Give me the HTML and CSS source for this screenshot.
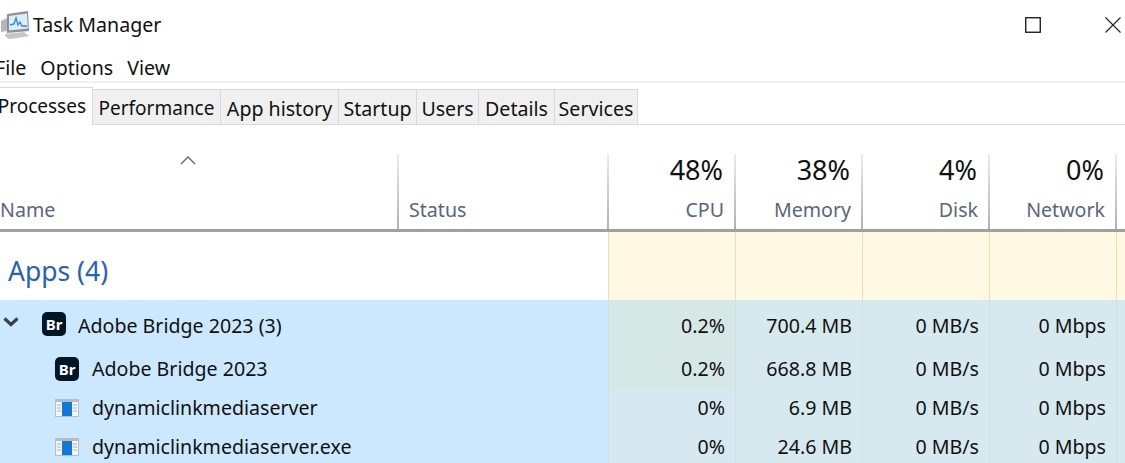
FILE: index.html
```html
<!DOCTYPE html>
<html>
<head>
	<meta charset="UTF-8" />
	<title>Task Manager</title>
	<link rel="stylesheet" href="styles.css">
</head>
<body>
	<div class="titlebar">
		<svg class="app-icon" width="30" height="30" viewBox="0 0 30 30">
			<path d="M0 12l6-3v13l-6 1z" fill="#b4b8bc"/>
			<path d="M6 5l21-3 1 20-22 2z" fill="#8b9197"/>
			<path d="M8 7l18-2.5.8 15-18.8 2z" fill="#dcedfa"/>
			<path d="M9 16l4-1 2-6 2 7 2-3 2 4h5" fill="none" stroke="#2f86d6" stroke-width="1.3"/>
			<path d="M4 25l19-2 5 4-18 3c-3 0-6-2-6-5z" fill="#c2c6c9"/>
		</svg>
		<span class="title">Task Manager</span>
		<div class="window-buttons">
			<svg class="win-max" width="16" height="16" viewBox="0 0 16 16"><rect x=".75" y=".75" width="14.5" height="14.5" fill="none" stroke="#111" stroke-width="1.3"/></svg>
			<svg class="win-close" width="16" height="16" viewBox="0 0 16 16"><path d="M.5.5l15 15M15.5.5l-15 15" stroke="#222" stroke-width="1.1"/></svg>
		</div>
	</div>
	<div class="menubar">
		<span>File</span>
		<span>Options</span>
		<span>View</span>
	</div>
	<div class="tabs">
		<div class="tab active tab-processes">Processes</div>
		<div class="tab tab-performance">Performance</div>
		<div class="tab tab-history">App history</div>
		<div class="tab tab-startup">Startup</div>
		<div class="tab tab-users">Users</div>
		<div class="tab tab-details">Details</div>
		<div class="tab tab-services">Services</div>
	</div>

	<div class="table">
		<div class="head head-name">
			<svg class="sort" width="16" height="9" viewBox="0 0 16 9"><path d="M1 8l7-7 7 7" fill="none" stroke="#5b6478" stroke-width="1.4"/></svg>
			<span class="label">Name</span>
		</div>
		<div class="head head-status"><span class="label">Status</span></div>
		<div class="head head-num"><span class="pct">48%</span><span class="label">CPU</span></div>
		<div class="head head-num"><span class="pct">38%</span><span class="label">Memory</span></div>
		<div class="head head-num"><span class="pct">4%</span><span class="label">Disk</span></div>
		<div class="head head-num"><span class="pct">0%</span><span class="label">Network</span></div>
		<div class="head head-rest"></div>

		<div class="group-row">
			<div class="group-name">Apps (4)</div>
			<div class="cell yellow"></div>
			<div class="cell yellow"></div>
			<div class="cell yellow"></div>
			<div class="cell yellow"></div>
			<div class="cell yellow"></div>
		</div>

		<div class="row row-parent">
			<div class="name">
				<svg class="chevron" width="16" height="11" viewBox="0 0 16 11"><path d="M1.5 1.5L8 7.5l6.5-6" fill="none" stroke="#37414c" stroke-width="3.2"/></svg>
				<span class="br-icon">Br</span>
				<span>Adobe Bridge 2023 (3)</span>
			</div>
			<div class="cell heat-cpu">0.2%</div>
			<div class="cell heat">700.4 MB</div>
			<div class="cell heat">0 MB/s</div>
			<div class="cell heat">0 Mbps</div>
			<div class="cell heat"></div>
		</div>
		<div class="row">
			<div class="name child">
				<span class="br-icon">Br</span>
				<span>Adobe Bridge 2023</span>
			</div>
			<div class="cell heat-cpu">0.2%</div>
			<div class="cell heat">668.8 MB</div>
			<div class="cell heat">0 MB/s</div>
			<div class="cell heat">0 Mbps</div>
			<div class="cell heat"></div>
		</div>
		<div class="row">
			<div class="name child">
				<svg class="exe-icon" width="24" height="18" viewBox="0 0 24 18">
					<rect width="24" height="18" fill="#b4bcc4"/>
					<rect x="1" y="3" width="22" height="14" fill="#f4f7fa"/>
					<rect x="7" y="3" width="10" height="14" fill="#0f78d8"/>
					<path d="M2 6h4M2 9h4M2 12h4M18 6h4M18 9h4M18 12h4" stroke="#a9b3bd"/>
				</svg>
				<span>dynamiclinkmediaserver</span>
			</div>
			<div class="cell heat-light">0%</div>
			<div class="cell heat">6.9 MB</div>
			<div class="cell heat">0 MB/s</div>
			<div class="cell heat">0 Mbps</div>
			<div class="cell heat"></div>
		</div>
		<div class="row">
			<div class="name child">
				<svg class="exe-icon" width="24" height="18" viewBox="0 0 24 18">
					<rect width="24" height="18" fill="#b4bcc4"/>
					<rect x="1" y="3" width="22" height="14" fill="#f4f7fa"/>
					<rect x="7" y="3" width="10" height="14" fill="#0f78d8"/>
					<path d="M2 6h4M2 9h4M2 12h4M18 6h4M18 9h4M18 12h4" stroke="#a9b3bd"/>
				</svg>
				<span>dynamiclinkmediaserver.exe</span>
			</div>
			<div class="cell heat-light">0%</div>
			<div class="cell heat">24.6 MB</div>
			<div class="cell heat">0 MB/s</div>
			<div class="cell heat">0 Mbps</div>
			<div class="cell heat"></div>
		</div>
	</div>
</body>
</html>
```

FILE: styles.css
```css
html, body {
	height: 100%;
}
body {
	margin: 0;
	overflow: hidden;
	background-color: #fff;
	color: #111;
	font-family: "Noto Sans", sans-serif;
	font-size: 19.6px;
}

/* title bar */
.titlebar {
	display: flex;
	align-items: center;
	height: 50px;
	padding-bottom: 2px;
	box-sizing: border-box;
}
.app-icon {
	flex: none;
	margin-left: 1px;
}
.title {
	margin-left: 2px;
}
.window-buttons {
	display: flex;
	align-items: center;
	gap: 64px;
	margin-left: auto;
	margin-right: 4px;
	margin-top: 2px;
}

/* menu */
.menubar {
	display: flex;
	align-items: center;
	gap: 14px;
	height: 28px;
	padding-top: 3px;
	margin-left: -5px;
	border-bottom: 2px solid #f0f0f0;
}

/* tabs */
.tabs {
	display: flex;
	align-items: flex-end;
	height: 41px;
	margin-left: -2px;
	border-bottom: 1px solid #d9d9d9;
}
.tab {
	box-sizing: border-box;
	display: flex;
	align-items: center;
	justify-content: center;
	height: 36px;
	padding-top: 2px;
	margin-bottom: -1px;
	background-color: #f0f0f0;
	border: 1px solid #d9d9d9;
	border-left: 0;
}
.tab.active {
	height: 38px;
	padding: 0 6px 1px 0;
	background-color: #fff;
	border-bottom: 0;
}
.tab-processes {
	width: 95px;
	justify-content: flex-end;
	font-size: 19px;
}
.tab-performance { width: 128px; font-size: 19px; }
.tab-history { width: 118px; }
.tab-startup { width: 78px; }
.tab-users { width: 62px; }
.tab-details { width: 76px; }
.tab-services { width: 83px; }

/* table */
.table {
	display: grid;
	grid-template-columns: 399px 210px 127px 127px 127px 127px 1fr;
	margin-top: 29px;
}
.head {
	box-sizing: border-box;
	display: flex;
	flex-direction: column;
	justify-content: flex-end;
	height: 78px;
	padding-bottom: 6px;
	border-bottom: 3px solid #a0a0a0;
	background: linear-gradient(#ececec, #b0b0b0) right / 2px 100% no-repeat;
}
.head-rest {
	background: none;
}
.head .label {
	color: #5a6679;
}
.sort {
	margin: 2px 0 auto 180px;
}
.head-status .label {
	margin-left: 10px;
}
.head-num {
	align-items: flex-end;
	padding-right: 12px;
}
.pct {
	font-size: 27px;
	line-height: 34px;
	margin-bottom: 9px;
	margin-right: 1px;
	color: #111;
}

.group-row, .row {
	display: grid;
	grid-column: 1 / -1;
	grid-template-columns: 608px 127px 127px 127px 127px 1fr;
}
.group-row {
	height: 68px;
}
.group-name {
	display: flex;
	align-items: center;
	padding-left: 8px;
	padding-top: 9px;
	color: #2a5fb5;
	font-size: 26.5px;
}
.row {
	height: 39px;
	background-color: #cce8ff;
}
.row-parent {
	height: 49px;
}
.name {
	display: flex;
	align-items: center;
}
.row-parent .name {
	padding-top: 2px;
}
.chevron {
	margin-left: 3px;
	margin-top: -6px;
}
.row-parent .br-icon {
	margin-left: 23px;
	margin-top: -3px;
}
.row-parent .name > span:last-child {
	margin-left: 12px;
}
.child {
	padding-left: 55px;
}
.child > span:last-child {
	margin-left: 13px;
}
.br-icon {
	flex: none;
	display: flex;
	align-items: center;
	justify-content: center;
	width: 24px;
	height: 24px;
	border-radius: 5px;
	background-color: #001526;
	color: #fff;
	font-size: 15px;
	font-weight: 700;
}
.exe-icon {
	flex: none;
}

.cell {
	display: flex;
	align-items: center;
	justify-content: flex-end;
	padding-right: 10px;
	box-sizing: border-box;
	border-left: 1px solid rgba(200, 210, 215, 0.35);
}
.row-parent .cell {
	padding-top: 2px;
}
.yellow {
	background-color: #fff8e2;
	border-left: 1px solid #f1deb0;
}
.heat {
	background-color: #d6e9ef;
}
.heat-cpu {
	background-color: #d6e8e6;
}
.heat-light {
	background-color: #d6e9f1;
}
```
